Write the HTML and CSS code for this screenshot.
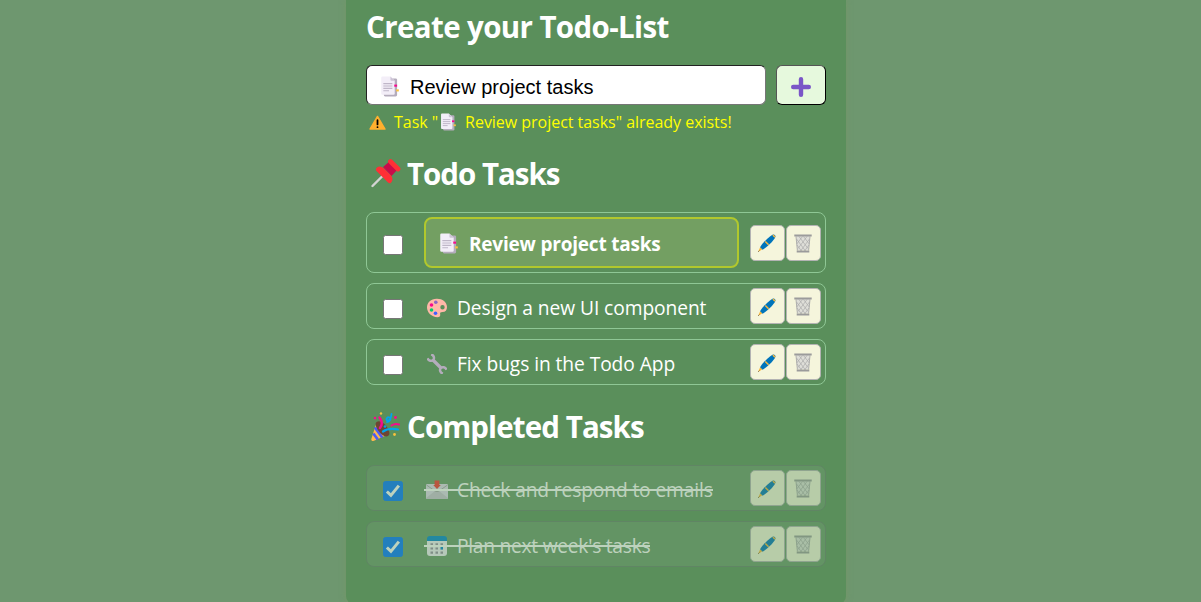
FILE: index.html
```html
<!DOCTYPE html>
<html lang="en">
<head>
<meta charset="utf-8">
<title>Todo List</title>
<link rel="stylesheet" href="styles.css">
</head>
<body>
<svg class="defs" aria-hidden="true">
  <symbol id="pages" viewBox="0 0 20 22">
    <path fill="#b4acbc" d="M4 2.500h12.500a1.500 1.500 0 0 1 1.500 1.500v16a1.500 1.500 0 0 1-1.500 1.500H5.500A1.500 1.500 0 0 1 4 20z"/>
    <path fill="#f3eef8" d="M2.500.5H11l4.500 4.500v13.500a1.200 1.200 0 0 1-1.200 1.200H2.500a1.200 1.200 0 0 1-1.200-1.200V1.700A1.200 1.200 0 0 1 2.500.5z"/>
    <path fill="#cdc4d6" d="M11 .5 15.500 5H12a1 1 0 0 1-1-1z"/>
    <path stroke="#bfb6c8" stroke-width="1.200" d="M3.500 8h9.500M3.500 10.500h9.500M3.500 13h9.500M3.500 15.500h6"/>
    <path fill="#f70a8d" d="M15 9h3v2.200h-3z"/><path fill="#f9c23c" d="M17 14h2.800v2.200H17z"/>
  </symbol>
  <symbol id="warning" viewBox="0 0 18 16">
    <path fill="#ffb02e" stroke="#ffb02e" stroke-width="1.500" stroke-linejoin="round" d="M9 1.500 17 15H1z"/>
    <path stroke="#000" stroke-width="1.900" stroke-linecap="round" d="M9 5.500v4.500M9 12.900v.1"/>
  </symbol>
  <symbol id="plus" viewBox="0 0 20 20">
    <path stroke="#7a56c7" stroke-width="4.400" stroke-linecap="round" d="M10 2.200v15.600M2.200 10h15.600"/>
  </symbol>
  <symbol id="pin" viewBox="0 0 30 30">
    <path stroke="#d3d3d3" stroke-width="2.400" stroke-linecap="round" d="m1.500 28 10-10"/>
    <path fill="#ca0b4a" d="m12 9 7-6 8 8-6.500 7z"/>
    <path stroke="#ff3036" stroke-width="4.800" stroke-linecap="round" d="M19.500 3.500 27 11"/>
    <path fill="#ff3036" d="M6 9.500c2-2 5-1 7 1l7 7c2 2 2 5 0 7.300-1 1-2.300.5-3-.3L5.500 13c-1-1-.700-2.500.5-3.500z"/>
  </symbol>
  <symbol id="party" viewBox="0 0 30 30">
    <path fill="#ffb84d" d="m5.500 10.500 9.500 13-12 5.200c-2 .8-3.200-.4-2.500-2.300z"/>
    <path stroke="#4b5cf5" stroke-width="2.700" d="m3.900 15.500 7.300 10M2.300 21.500l4.500 6"/>
    <path fill="#6d4534" d="M5.500 10c3-2 7 .5 10 4.500s4 8 1.500 9.500c-3 1.500-7-1.500-9.500-5s-4-7.500-2-9z"/>
    <path fill="none" stroke="#f70a8d" stroke-width="2.500" stroke-linecap="round" d="M8.500 5.500c3 4 2.500 8 .5 10.500"/>
    <path fill="none" stroke="#00a6ed" stroke-width="2.200" stroke-linecap="round" d="M12 19.500c5-3.500 9.500-3 15-2"/>
    <path fill="none" stroke="#f70a8d" stroke-width="2.100" stroke-linecap="round" d="M20.500 13.500c3-2 5-2 7.500-1"/>
    <path fill="none" stroke="#00a6ed" stroke-width="1.800" stroke-linecap="round" d="M20.500 2c-.5 4-1.500 7-4 6.500-2.500-1 0-4 2-3s.5 4.500-2.500 4.500"/>
    <circle cx="10" cy="1.500" r="1.200" fill="#f9c23c"/><circle cx="4" cy="6" r="1.300" fill="#f70a8d"/>
    <circle cx="24.500" cy="5.500" r="1.400" fill="#f70a8d"/><circle cx="23.500" cy="22.500" r="1.400" fill="#f9c23c"/><circle cx="14" cy="14.500" r="1.300" fill="#00a6ed"/>
  </symbol>
  <symbol id="palette" viewBox="0 0 20 20">
    <path fill="#ffb8a8" fill-rule="evenodd" d="M9.500.8C15 .500 20 4 20 9c0 3-1.500 5-4.500 5-2 0-2.700.7-2.300 2.200.4 1.800-.7 3-2.700 3C4.500 19 0 14.500 0 9.500 0 4.500 4 1 9.500.8zM15.500 7a2.200 2.200 0 1 0 0 4.400 2.200 2.200 0 0 0 0-4.400z"/>
    <circle cx="8.800" cy="4.300" r="1.800" fill="#8d65c5"/><circle cx="4.500" cy="7" r="1.800" fill="#f70a8d"/>
    <circle cx="4.500" cy="12" r="1.800" fill="#00d26a"/><circle cx="8.500" cy="15.200" r="1.800" fill="#3f5fff"/>
  </symbol>
  <symbol id="wrench" viewBox="0 0 20 20">
    <path stroke="#b4acbc" stroke-width="3.200" d="m5.500 5.500 9 9"/>
    <path fill="none" stroke="#b4acbc" stroke-width="2.500" d="M4.200.3C7 1.500 7.600 4 6.300 5.900 4.600 7.500 1.700 7 .5 4.300M15.800 19.700c-2.800-1.200-3.400-3.700-2.100-5.600 1.700-1.600 4.600-1.100 5.800 1.600"/>
  </symbol>
  <symbol id="mail" viewBox="0 0 22 20">
    <path fill="#e1d8ec" d="M1 4h20a1 1 0 0 1 1 1v13a1 1 0 0 1-1 1H1a1 1 0 0 1-1-1V5a1 1 0 0 1 1-1z"/>
    <path fill="#cdc4d6" d="m0 18 9-7h4l9 7a1 1 0 0 1-1 1H1a1 1 0 0 1-1-1z"/>
    <path fill="none" stroke="#9b9b9b" stroke-width=".8" d="m.5 5 8.500 6q2 1.200 4 0l8.500-6"/>
    <path fill="#f8312f" d="M8.600.5h4.800V5h1.400L11 9 7.200 5h1.400z"/>
  </symbol>
  <symbol id="calendar" viewBox="0 0 20 20">
    <path fill="#f3eef8" d="M0 5h20v12a3 3 0 0 1-3 3H3a3 3 0 0 1-3-3z"/>
    <path fill="#0084ce" d="M0 5V3a3 3 0 0 1 3-3h14a3 3 0 0 1 3 3v2z"/>
    <path stroke="#998ea4" stroke-width="2.200" stroke-dasharray="2.500 2.500" d="M3.500 8.300h13M3.500 12.500h10M3.500 16.600h13"/>
    <path fill="#0084ce" d="M13.500 11H16v2.600h-2.500z"/>
  </symbol>
  <symbol id="pen" viewBox="0 0 18 18">
    <path fill="#f9b83c" d="m0 18 2.300-5 2.200 2.200z"/>
    <path fill="#0074ba" d="M2.100 13.300C3.300 10.300 10.500 3 15 .6c1.200-.6 3 1 2.400 2.400C15.500 7.200 8 14 4.700 15.700z"/>
    <path stroke="#f9b83c" stroke-width="1.500" d="m7.300 7.400 3.300 3.400M14.900 1l2.100 2.100"/>
    <path stroke="#483d35" stroke-width=".8" d="m.3 17.700 1-1"/>
  </symbol>
  <symbol id="bin" viewBox="0 0 18 19">
    <path fill="#deded8" d="M2 2h14l-1.400 14H3.400z"/>
    <path fill="none" stroke="#aaa" stroke-width=".7" d="m2.500 5 9 12M5 2.500 14 14.500M9.500 2.500l5.800 7.500M3 11l4.500 6M15.500 5l-9 12M13 2.500 4 14.500M8.500 2.500 2.700 10M15 11l-4.500 6"/>
    <path stroke="#a8a8a8" stroke-width=".9" d="M2 2.500 3.400 16.500M16 2.500l-1.400 14"/>
    <path stroke="#9b9b9b" stroke-width="2" d="M.3 1.500h17.400M2.700 17.500h12.600"/>
  </symbol>
  <symbol id="check" viewBox="0 0 20 20">
    <path fill="none" stroke="#fff" stroke-width="3.300" d="m3.200 10.500 4.500 4.400L16.500 4"/>
  </symbol>
</svg>
<main class="app">
  <h1 class="title">Create your Todo-List</h1>
  <form class="entry">
    <div class="field"><svg class="i-field"><use href="#pages"/></svg><span>Review project tasks</span></div>
    <button class="add" type="button"><svg class="i-plus"><use href="#plus"/></svg></button>
  </form>
  <p class="alert"><svg class="i-warn"><use href="#warning"/></svg><span>Task "</span><svg class="i-page"><use href="#pages"/></svg><span>Review project tasks" already exists!</span></p>

  <h2 class="heading"><svg class="i-head"><use href="#pin"/></svg><span>Todo Tasks</span></h2>
  <ul class="list">
    <li class="item marked"><span class="box"></span><div class="label"><svg class="i-doc"><use href="#pages"/></svg><span>Review project tasks</span></div><button class="act"><svg class="i-pen"><use href="#pen"/></svg></button><button class="act"><svg class="i-bin"><use href="#bin"/></svg></button></li>
    <li class="item"><span class="box"></span><div class="label"><svg class="i-task"><use href="#palette"/></svg><span>Design a new UI component</span></div><button class="act"><svg class="i-pen"><use href="#pen"/></svg></button><button class="act"><svg class="i-bin"><use href="#bin"/></svg></button></li>
    <li class="item"><span class="box"></span><div class="label"><svg class="i-task"><use href="#wrench"/></svg><span>Fix bugs in the Todo App</span></div><button class="act"><svg class="i-pen"><use href="#pen"/></svg></button><button class="act"><svg class="i-bin"><use href="#bin"/></svg></button></li>
  </ul>

  <h2 class="heading second"><svg class="i-head"><use href="#party"/></svg><span>Completed Tasks</span></h2>
  <ul class="list">
    <li class="item done"><span class="box checked"><svg><use href="#check"/></svg></span><div class="label"><svg class="i-task i-mail"><use href="#mail"/></svg><span>Check and respond to emails</span></div><button class="act"><svg class="i-pen"><use href="#pen"/></svg></button><button class="act"><svg class="i-bin"><use href="#bin"/></svg></button></li>
    <li class="item done"><span class="box checked"><svg><use href="#check"/></svg></span><div class="label"><svg class="i-task"><use href="#calendar"/></svg><span class="tight">Plan next week's tasks</span></div><button class="act"><svg class="i-pen"><use href="#pen"/></svg></button><button class="act"><svg class="i-bin"><use href="#bin"/></svg></button></li>
  </ul>
</main>
</body>
</html>
```

FILE: styles.css
```css
* { box-sizing: border-box; }
body {
  margin: 0;
  height: 602px;
  overflow: hidden;
  background: #6e976f;
  color: #fff;
  font-family: "Open Sans", "Noto Sans", sans-serif;
}
svg { display: block; flex: none; overflow: visible; }
.defs { width: 0; height: 0; position: absolute; }
.app {
  width: 500px;
  height: 604px;
  margin: 0 0 0 346px;
  padding: 5px 20px 0;
  background: #5a8f5b;
  border-radius: 0 0 8px 8px;
  box-shadow: 0 0 6px rgba(118, 150, 100, .8);
}
h1, h2, p, ul { margin: 0; padding: 0; }
.title { height: 60px; line-height: 43px; font-size: 29.5px; font-weight: 700; letter-spacing: -.62px; white-space: nowrap; }
.entry { display: flex; gap: 10px; height: 40px; }
.field {
  width: 400px;
  display: flex;
  align-items: center;
  padding: 4px 0 0 13px;
  background: #fff;
  border: 1px solid #767676;
  border-top-color: #222;
  border-left-color: #222;
  border-radius: 6px;
  color: #000;
  font: 20px "Liberation Sans", Arial, sans-serif;
}
.i-field { width: 19px; height: 21px; margin: -1px 11px 0 0; }
.add {
  width: 50px;
  padding: 3px 0 0;
  display: grid;
  place-items: center;
  background: #e6f9dd;
  border: 1px solid #000;
  border-top-color: #555;
  border-left-color: #555;
  border-radius: 6px;
}
.i-plus { width: 20px; height: 20px; }
.alert {
  display: flex;
  align-items: center;
  height: 35px;
  padding: 0 0 2px 3px;
  color: #ff0;
  font-size: 16px;
  letter-spacing: -.03px;
  white-space: nowrap;
}
.i-warn { width: 17px; height: 15px; margin: 2px 8px 0 0; }
.i-page { width: 16px; height: 18px; margin: 0 9px 0 2px; }
.heading {
  display: flex;
  height: 72px;
  padding: 13px 0 0 5px;
  gap: 6px;
  font-size: 29.5px;
  font-weight: 700;
  letter-spacing: -1px;
  line-height: 41px;
  white-space: nowrap;
}
.i-head { width: 30px; height: 30px; margin: 5px 0 0; }
.second { height: 80px; padding-top: 21px; letter-spacing: -.9px; }
.second .i-head { margin-top: 6px; }
.list { display: flex; flex-direction: column; gap: 10px; list-style: none; }
.item {
  display: flex;
  align-items: center;
  height: 46px;
  padding: 0 4px 0 16px;
  border: 1px solid #8fc795;
  border-radius: 8px;
}
.marked { height: 61px; }
.box {
  flex: none;
  width: 20px;
  height: 20px;
  margin: 5px 20.600px 0 .4px;
  background: #fff;
  border: 1px solid #767676;
  border-radius: 2.500px;
}
.label {
  display: flex;
  align-items: center;
  width: 314px;
  height: 44px;
  margin-right: 12px;
  padding: 3px 0 0 3px;
  font-size: 19.200px;
  letter-spacing: -.07px;
  white-space: nowrap;
}
.label span { margin-top: -1px; }
.i-task { width: 20px; height: 20px; margin-right: 10px; }
.marked .label {
  height: 51px;
  width: 315px;
  margin-right: 11px;
  padding: 3px 0 0 13px;
  background: #739f62;
  border: 2px solid #b1c82d;
  border-radius: 8px;
  font-size: 19px;
  font-weight: 700;
  letter-spacing: -.2px;
}
.marked .box { margin-top: 4px; }
.i-doc { width: 19px; height: 21px; margin: -1px 11px 0 0; }
.act {
  flex: none;
  width: 35px;
  height: 36px;
  margin-right: 1px;
  padding: 1px 0 0;
  display: grid;
  place-items: center;
  background: #f5f5dc;
  border: 1px solid #b3b3b3;
  border-radius: 5px;
}
.act:last-child { margin-right: 0; }
.i-pen { width: 18px; height: 18px; }
.i-bin { width: 18px; height: 19px; }
.done { opacity: .6; background: rgba(120, 160, 120, .55); border-color: #64806a; }
.checked { background: #0075ff; border-color: #0075ff; }
.checked svg { width: 18px; height: 18px; }
.i-mail { width: 22px; margin: 0 9px 0 -1px; }
.done .label { letter-spacing: -.12px; }
.done .label .tight { letter-spacing: -.25px; }
/* The strike runs under the icon as well as the text. */
.done .label span { position: relative; }
.done .label span::before {
  content: "";
  position: absolute;
  left: -33px;
  right: 0;
  top: 13px;
  height: 2px;
  background: #fff;
}
```
